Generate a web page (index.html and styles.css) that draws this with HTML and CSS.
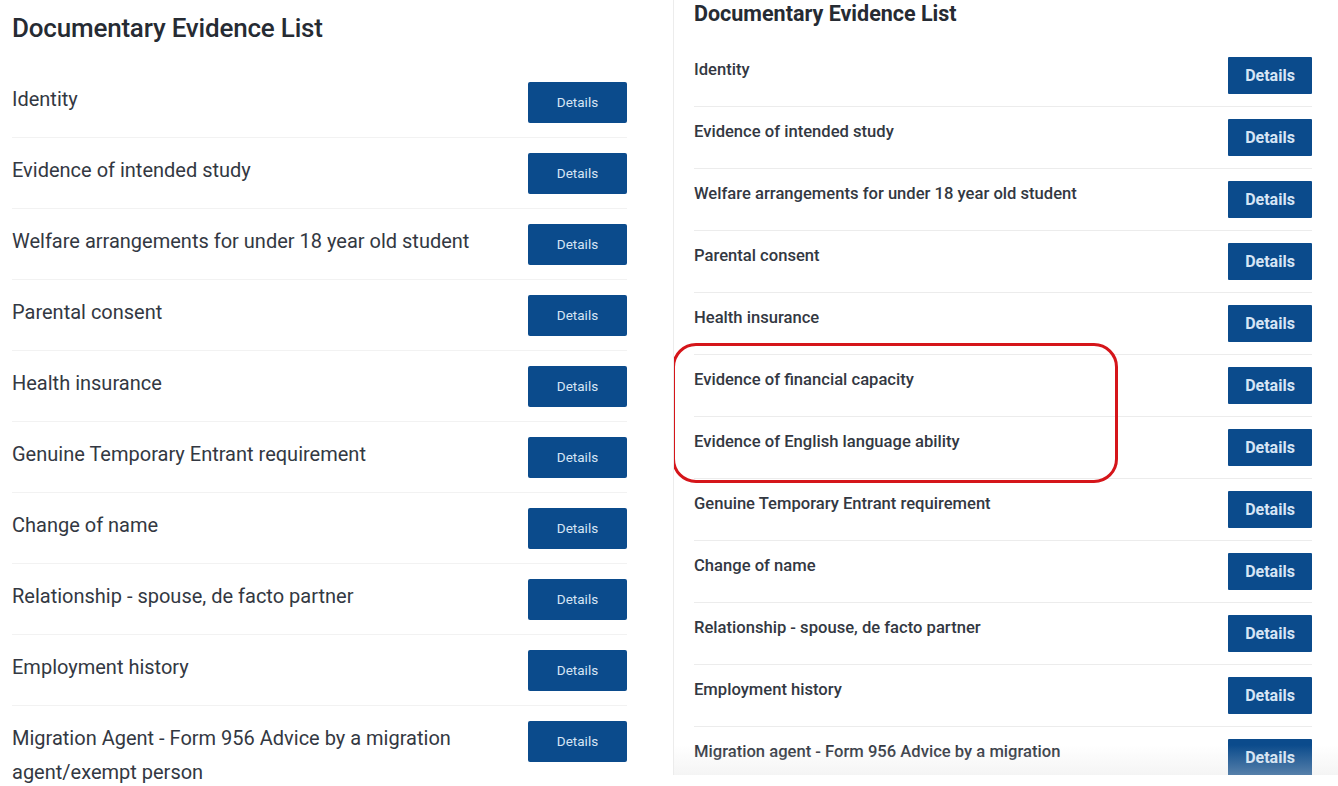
FILE: index.html
```html
<!DOCTYPE html>
<html>

<head>
    <title>Documentary Evidence List</title>
    <link rel="stylesheet" href="styles.css">
</head>

<body>
    <div class="page">
        <div class="panel panel-a">
            <h2 class="title">Documentary Evidence List</h2>
            <ul class="list">
                <li><span class="name">Identity</span><a href="#" class="btn">Details</a></li>
                <li><span class="name">Evidence of intended study</span><a href="#" class="btn">Details</a></li>
                <li><span class="name">Welfare arrangements for under 18 year old student</span><a href="#" class="btn">Details</a></li>
                <li><span class="name">Parental consent</span><a href="#" class="btn">Details</a></li>
                <li><span class="name">Health insurance</span><a href="#" class="btn">Details</a></li>
                <li><span class="name">Genuine Temporary Entrant requirement</span><a href="#" class="btn">Details</a></li>
                <li><span class="name">Change of name</span><a href="#" class="btn">Details</a></li>
                <li><span class="name">Relationship - spouse, de facto partner</span><a href="#" class="btn">Details</a></li>
                <li><span class="name">Employment history</span><a href="#" class="btn">Details</a></li>
                <li class="last"><span class="name">Migration Agent - Form 956 Advice by a migration agent/exempt person</span><a href="#" class="btn">Details</a></li>
            </ul>
        </div>

        <div class="panel panel-b">
            <h2 class="title">Documentary Evidence List</h2>
            <ul class="list">
                <li><span class="name">Identity</span><a href="#" class="btn">Details</a></li>
                <li><span class="name">Evidence of intended study</span><a href="#" class="btn">Details</a></li>
                <li><span class="name">Welfare arrangements for under 18 year old student</span><a href="#" class="btn">Details</a></li>
                <li><span class="name">Parental consent</span><a href="#" class="btn">Details</a></li>
                <li><span class="name">Health insurance</span><a href="#" class="btn">Details</a></li>
                <li><span class="name">Evidence of financial capacity</span><a href="#" class="btn">Details</a></li>
                <li><span class="name">Evidence of English language ability</span><a href="#" class="btn">Details</a></li>
                <li><span class="name">Genuine Temporary Entrant requirement</span><a href="#" class="btn">Details</a></li>
                <li><span class="name">Change of name</span><a href="#" class="btn">Details</a></li>
                <li><span class="name">Relationship - spouse, de facto partner</span><a href="#" class="btn">Details</a></li>
                <li><span class="name">Employment history</span><a href="#" class="btn">Details</a></li>
                <li><span class="name">Migration agent - Form 956 Advice by a migration</span><a href="#" class="btn">Details</a></li>
            </ul>
            <div class="mark"></div>
            <div class="fade"></div>
        </div>
    </div>
</body>

</html>
```

FILE: styles.css
```css
* {
    margin: 0;
    padding: 0;
    box-sizing: border-box;
}

body {
    background-color: #fff;
    font-family: Roboto, "Liberation Sans", sans-serif;
    color: #2f3540;
}

li {
    list-style-type: none;
}

a {
    text-decoration: none;
}

.page {
    display: flex;
    width: 1338px;
    height: 786px;
    overflow: hidden;
}

/* left shot */

.panel-a {
    width: 640px;
    padding-left: 12px;
}

.panel-a .title {
    font-size: 26px;
    font-weight: 500;
    line-height: 32px;
    padding-top: 12px;
    margin-bottom: 23px;
    color: #262b33;
    letter-spacing: -0.2px;
}

.panel-a .list {
    width: 615px;
}

.panel-a .list li {
    display: flex;
    align-items: flex-start;
    padding: 15px 0 14px;
    border-bottom: 1px solid #f2f2f2;
}

.panel-a .list li.last {
    border-bottom: none;
}

.panel-a .name {
    flex: 1;
    padding-right: 40px;
    font-size: 20px;
    line-height: 34px;
    color: #333842;
}

.panel-a .btn {
    width: 99px;
    height: 41px;
    line-height: 41px;
    flex-shrink: 0;
    text-align: center;
    font-size: 13.5px;
    color: #d6e5f5;
    background-color: #0b4b8c;
    border-radius: 2px;
}

/* right shot */

.panel-b {
    flex: 1;
    margin-left: 33px;
    height: 775px;
    padding: 0 26px 0 20px;
    border-left: 1px solid #ececec;
    position: relative;
    overflow: hidden;
}

.panel-b .title {
    font-size: 21.5px;
    font-weight: 700;
    line-height: 28px;
    margin-bottom: 17px;
    color: #262b33;
}

.panel-b .list li {
    display: flex;
    align-items: flex-start;
    padding: 12px 0;
    border-bottom: 1px solid #ececec;
}

.panel-b .name {
    flex: 1;
    font-size: 16.6px;
    font-weight: 500;
    line-height: 26px;
    color: #333842;
}

.panel-b .btn {
    width: 84px;
    height: 37px;
    line-height: 37px;
    flex-shrink: 0;
    text-align: center;
    font-size: 16px;
    font-weight: 700;
    color: #d6e5f5;
    background-color: #0b4b8c;
    border-radius: 1px;
}

.mark {
    position: absolute;
    left: -2px;
    top: 343px;
    width: 446px;
    height: 140px;
    border: 3px solid #d5151a;
    border-radius: 24px;
}

.fade {
    position: absolute;
    left: 0;
    right: 0;
    bottom: 0;
    height: 30px;
    background: linear-gradient(rgba(230, 230, 230, 0), rgba(225, 225, 225, 0.35));
}
```
